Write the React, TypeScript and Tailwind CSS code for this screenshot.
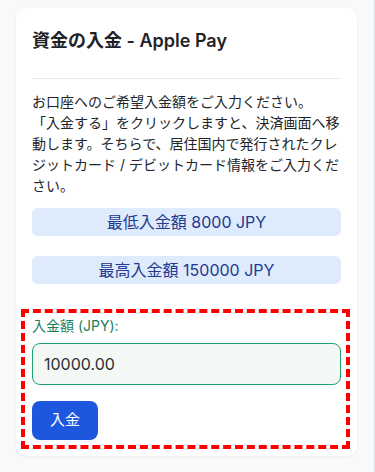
import { useState } from 'react'

const font = { fontFamily: 'Inter, "Noto Sans CJK JP", sans-serif' }

export default function App() {
  const [amount, setAmount] = useState('10000.00')

  return (
    <div className="min-h-[472px] w-full border-r border-[#dcdfe3] bg-[#f8f9fa] pt-2 pl-4" style={font}>
      <div className="w-[341px] rounded-[10px] bg-white px-4 pt-[19px] pb-4 shadow-[0_1px_3px_rgba(0,0,0,0.06)]">
        <h1 className="text-[18px] leading-[28px] font-semibold text-[#1f2328]">資金の入金 - Apple Pay</h1>
        <hr className="mt-[23px] border-t border-[#e5e7eb]" />

        <p className="mt-[12px] text-[14px] leading-[21px] text-[#212529]">
          お口座へのご希望入金額をご入力ください。
          <br />
          「入金する」をクリックしますと、決済画面へ移動します。そちらで、居住国内で発行されたクレジットカード / デビットカード情報をご入力ください。
        </p>

        <div className="mt-[12px] flex h-[28px] items-center justify-center rounded-md bg-[#deebfd] text-[16px] text-[#25388f]">
          最低入金額 8000 JPY
        </div>
        <div className="mt-[20px] flex h-[28px] items-center justify-center rounded-md bg-[#deebfd] text-[16px] text-[#25388f]">
          最高入金額 150000 JPY
        </div>

        {/* form, with the dashed highlight drawn over it */}
        <div className="relative mt-[31px]">
          <div className="pointer-events-none absolute -top-[6px] -right-[9px] -bottom-[9px] -left-[11px] border-4 border-dashed border-[#ff0000]" />
          <label className="block text-[14px] leading-[21px] text-[#1a7f5a]">入金額 (JPY):</label>
          <input
            value={amount}
            onChange={(e) => setAmount(e.target.value)}
            className="mt-[7px] block h-[42px] w-full rounded-lg border border-[#1ea272] bg-[#f3f8f5] px-[11px] text-[16px] text-[#2b2f33] outline-none"
            style={font}
          />
          <button className="mt-[16px] h-[39px] rounded-lg bg-[#1d57dd] px-[18px] text-[15px] text-white">入金</button>
        </div>
      </div>
    </div>
  )
}
